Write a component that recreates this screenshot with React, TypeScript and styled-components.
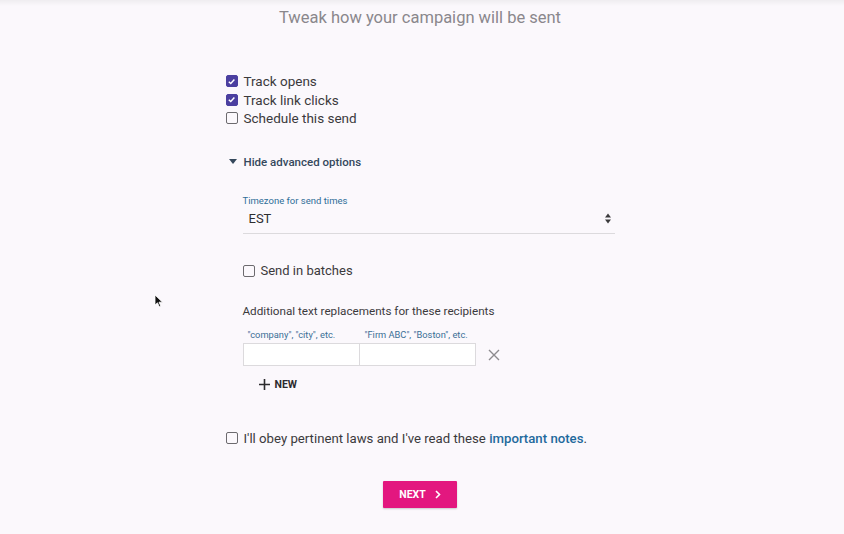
import styled, { createGlobalStyle } from "styled-components";

const GlobalStyle = createGlobalStyle`
  html, body {
    margin: 0;
    padding: 0;
    background: #fbf8fc;
    font-family: Roboto, "Liberation Sans", sans-serif;
  }
`;

const Page = styled.div`
  position: relative;
  width: 844px;
  height: 534px;
  overflow: hidden;
  background: linear-gradient(#efedf0 0px, #fbf8fc 6px);
`;

const Title = styled.h2`
  margin: 0;
  padding: 8px 4px 0 0;
  text-align: center;
  font-size: 16.5px;
  font-weight: 400;
  line-height: 20px;
  color: #8a878c;
`;

const Column = styled.div`
  width: 394px;
  margin: 0 auto;
  padding-left: 1px;
  display: flex;
  flex-direction: column;
`;

const CheckList = styled.div`
  margin-top: 44px;
  display: flex;
  flex-direction: column;
`;

const CheckRow = styled.label<{ $size?: number; $top?: number }>`
  display: flex;
  align-items: center;
  gap: 6px;
  height: 18.5px;
  margin-top: ${(p) => p.$top ?? 0}px;
  font-size: ${(p) => p.$size ?? 13.5}px;
  color: #3b3a3c;
`;

const Box = styled.span<{ $checked?: boolean }>`
  width: 12px;
  height: 12px;
  box-sizing: border-box;
  border-radius: 2px;
  border: 1.5px solid ${(p) => (p.$checked ? "#4b3fa0" : "#6c6a6e")};
  background: ${(p) => (p.$checked ? "#4b3fa0" : "transparent")};
  display: flex;
  align-items: center;
  justify-content: center;
  flex-shrink: 0;
`;

const Toggle = styled.div`
  margin-top: 27px;
  display: flex;
  align-items: center;
  gap: 7px;
  padding-left: 3px;
  font-size: 11.5px;
  font-weight: 500;
  color: #35485c;
`;

const Advanced = styled.div`
  padding: 0 5px 0 17px;
  display: flex;
  flex-direction: column;
`;

const FieldLabel = styled.div`
  margin-top: 26px;
  font-size: 9.5px;
  color: #2f6e98;
  line-height: 12px;
`;

const Select = styled.div`
  display: flex;
  align-items: center;
  justify-content: space-between;
  height: 27px;
  padding: 0 4px 2px 6px;
  box-sizing: border-box;
  border-bottom: 1px solid #dcdadd;
  font-size: 13px;
  color: #2e2d30;
`;

const SectionLabel = styled.div`
  margin-top: 24px;
  font-size: 11.7px;
  color: #3b3a3c;
`;

const PairHeads = styled.div`
  margin-top: 11px;
  display: grid;
  grid-template-columns: 117px 118px;
  font-size: 9.3px;
  color: #3a6f96;
  line-height: 11px;
`;

const Head = styled.span`
  padding-left: 5px;
`;

const Pair = styled.div`
  margin-top: 3px;
  display: flex;
  align-items: center;
`;

const Input = styled.div`
  width: 117px;
  height: 23px;
  box-sizing: border-box;
  border: 1px solid #dcdadd;
  background: #fff;
  & + & {
    margin-left: -1px;
  }
`;

const Remove = styled.span`
  margin-left: 12px;
  display: flex;
`;

const NewButton = styled.div`
  margin-top: 12px;
  padding-left: 16px;
  display: flex;
  align-items: center;
  gap: 5px;
  font-size: 10.5px;
  font-weight: 700;
  color: #2c2b2e;
`;

const Link = styled.a`
  color: #1f6a9c;
  font-weight: 500;
  text-decoration: none;
`;

const Footer = styled.div`
  margin-top: 33px;
  display: flex;
  justify-content: center;
  padding-right: 5px;
`;

const NextButton = styled.button`
  width: 74px;
  height: 27px;
  border: none;
  border-radius: 1px;
  background: #e3177f;
  color: #fff;
  font-family: Roboto, "Liberation Sans", sans-serif;
  font-size: 10.5px;
  font-weight: 700;
  display: flex;
  align-items: center;
  justify-content: center;
  gap: 9px;
  box-shadow: 0 1px 2px rgba(0, 0, 0, 0.2);
`;

const Cursor = styled.svg`
  position: absolute;
  left: 154px;
  top: 294px;
`;

const Check = ({ checked }: { checked?: boolean }) => (
  <Box $checked={checked}>
    {checked && (
      <svg width="9" height="9" viewBox="0 0 10 10">
        <path d="M2 5.2 L4.2 7.3 L8.2 2.8" fill="none" stroke="#fff" strokeWidth="1.6" />
      </svg>
    )}
  </Box>
);

export default function App() {
  return (
    <>
      <GlobalStyle />
      <Page>
        <Title>Tweak how your campaign will be sent</Title>
        <Column>
          <CheckList>
            <CheckRow>
              <Check checked />
              Track opens
            </CheckRow>
            <CheckRow>
              <Check checked />
              Track link clicks
            </CheckRow>
            <CheckRow>
              <Check />
              Schedule this send
            </CheckRow>
          </CheckList>
          <Toggle>
            <svg width="8" height="5" viewBox="0 0 8 5">
              <path d="M0 0 H8 L4 5 Z" fill="#35485c" />
            </svg>
            Hide advanced options
          </Toggle>
          <Advanced>
            <FieldLabel>Timezone for send times</FieldLabel>
            <Select>
              EST
              <svg width="6" height="11" viewBox="0 0 6 11">
                <path d="M0 4.5 L3 0.5 L6 4.5 Z M0 6.5 L3 10.5 L6 6.5 Z" fill="#3b3a3c" />
              </svg>
            </Select>
            <CheckRow $top={28} $size={13}>
              <Check />
              Send in batches
            </CheckRow>
            <SectionLabel>Additional text replacements for these recipients</SectionLabel>
            <PairHeads>
              <Head>"company", "city", etc.</Head>
              <Head>"Firm ABC", "Boston", etc.</Head>
            </PairHeads>
            <Pair>
              <Input />
              <Input />
              <Remove>
                <svg width="12" height="12" viewBox="0 0 12 12">
                  <path d="M1 1 L11 11 M11 1 L1 11" stroke="#8c8a8e" strokeWidth="1.4" />
                </svg>
              </Remove>
            </Pair>
            <NewButton>
              <svg width="11" height="11" viewBox="0 0 11 11">
                <path d="M5.5 0 V11 M0 5.5 H11" stroke="#2c2b2e" strokeWidth="1.6" />
              </svg>
              NEW
            </NewButton>
          </Advanced>
          <CheckRow $top={38} $size={13.2}>
            <Check />
            <span>
              I'll obey pertinent laws and I've read these <Link>important notes</Link>.
            </span>
          </CheckRow>
          <Footer>
            <NextButton>
              NEXT
              <svg width="6" height="9" viewBox="0 0 6 9">
                <path d="M1 1 L4.5 4.5 L1 8" fill="none" stroke="#fff" strokeWidth="1.6" />
              </svg>
            </NextButton>
          </Footer>
        </Column>
        <Cursor width="10" height="14" viewBox="0 0 10 14">
          <path d="M1 1 V11 L3.5 8.8 L5.3 12.8 L6.8 12.1 L5 8.2 H8.5 Z" fill="#111" stroke="#fff" strokeWidth="0.8" />
        </Cursor>
      </Page>
    </>
  );
}
